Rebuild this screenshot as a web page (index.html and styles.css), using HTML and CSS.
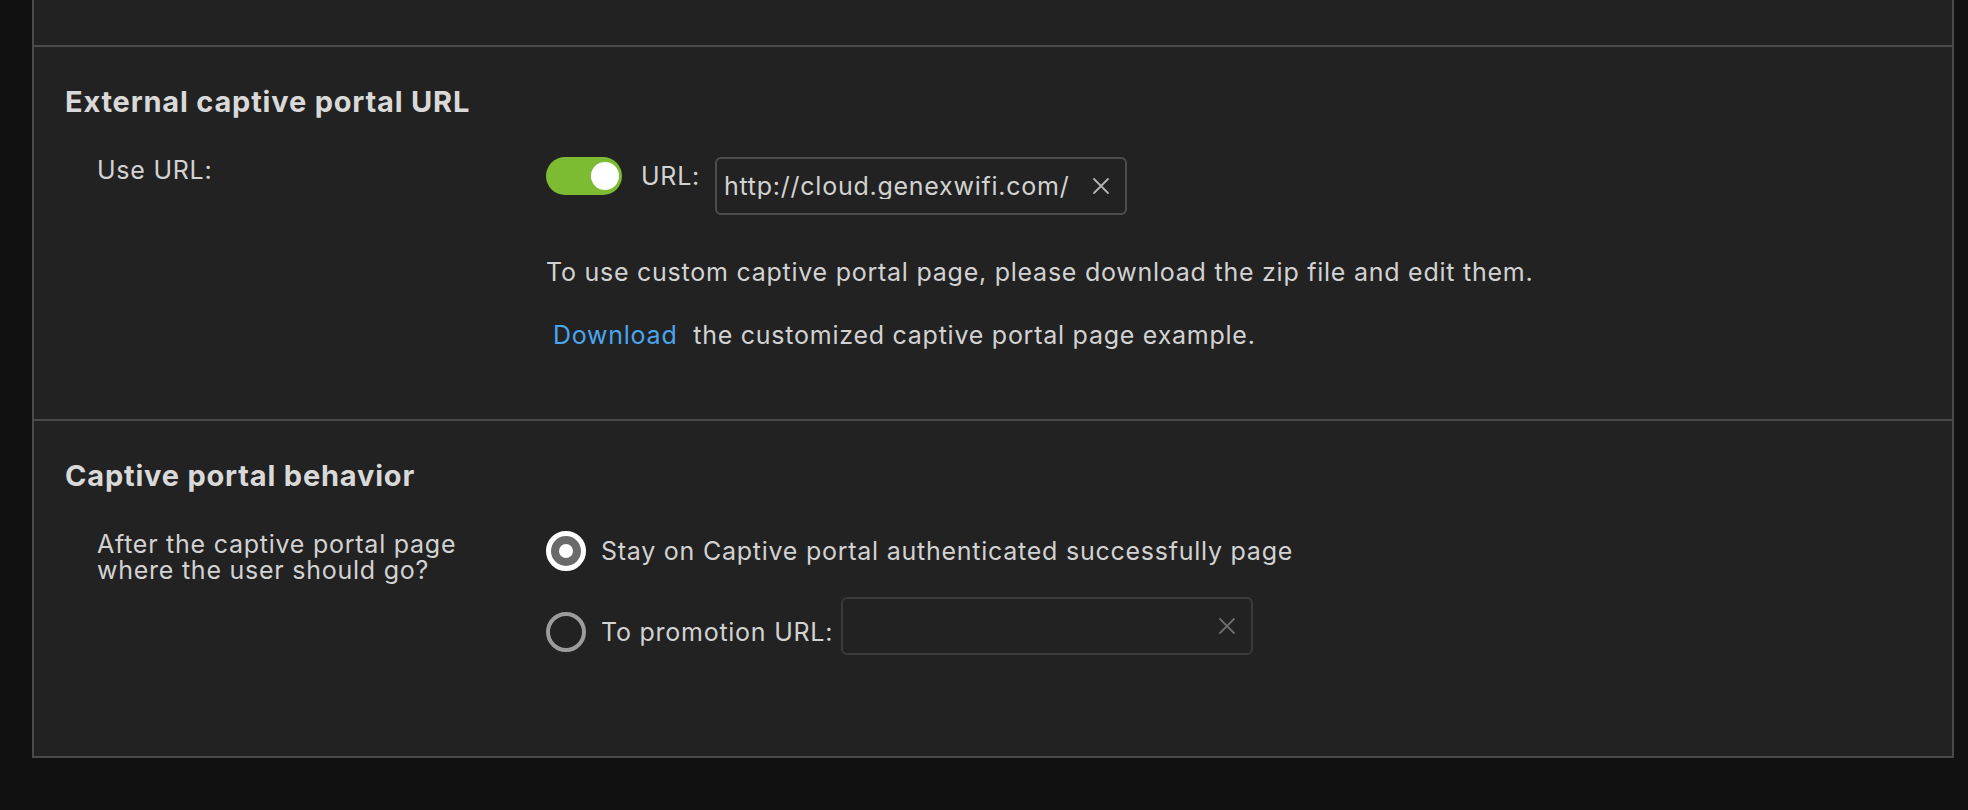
FILE: index.html
```html
<!DOCTYPE html>
<html lang="en">
<head>
<meta charset="utf-8">
<title>Captive portal settings</title>
<link rel="stylesheet" href="styles.css">
</head>
<body>
<div class="page">
  <div class="panel">
    <div class="prev-section"></div>

    <section class="section section-url">
      <h2 class="section-title">External captive portal URL</h2>
      <div class="row">
        <div class="row-label">Use URL:</div>
        <div class="row-content">
          <div class="url-line">
            <div class="toggle-group">
              <span class="toggle is-on"><span class="toggle-knob"></span></span>
              <span class="url-label">URL:</span>
            </div>
            <div class="field">
              <input class="field-input" type="text" value="http://cloud.genexwifi.com/captive-portal/login.html" readonly>
              <svg class="field-clear" viewBox="0 0 18 18" width="18" height="18" aria-hidden="true"><path d="M2 2 L16 16 M16 2 L2 16"/></svg>
            </div>
          </div>
          <p class="note note-first">To use custom captive portal page, please download the zip file and edit them.</p>
          <p class="note note-second"><a class="link" href="#">Download</a> the customized captive portal page example.</p>
        </div>
      </div>
    </section>

    <section class="section section-behavior">
      <h2 class="section-title">Captive portal behavior</h2>
      <div class="row">
        <div class="row-label">
          <span class="label-line">After the captive portal page</span>
          <span class="label-line">where the user should go?</span>
        </div>
        <div class="row-content">
          <div class="option">
            <span class="radio is-checked"><span class="radio-dot"></span></span>
            <span class="option-text">Stay on Captive portal authenticated successfully page</span>
          </div>
          <div class="option-promo">
            <div class="option">
              <span class="radio"></span>
              <span class="option-text">To promotion URL:</span>
            </div>
            <div class="field field-dim">
              <input class="field-input" type="text" value="" aria-label="Promotion URL">
              <svg class="field-clear" viewBox="0 0 18 18" width="18" height="18" aria-hidden="true"><path d="M2 2 L16 16 M16 2 L2 16"/></svg>
            </div>
          </div>
        </div>
      </div>
    </section>
  </div>
</div>
</body>
</html>
```
FILE: styles.css
```css
* { box-sizing: border-box; }

html, body {
  margin: 0;
  padding: 0;
  background: #111111;
}

body {
  font-family: Inter, "Noto Sans", sans-serif;
  font-size: 25px;
  line-height: 26px;
  letter-spacing: 0.75px;
  color: #d2d2d2;
}

.page {
  padding-left: 32px;
  height: 810px;
  overflow: hidden;
}

.panel {
  width: 1922px;
  background: #222222;
  border: 2px solid #4a4a4a;
  border-top: none;
}

.prev-section {
  height: 45px;
}

.section {
  border-top: 2px solid #4a4a4a;
  padding: 37px 0 0 31px;
}

.section-url { padding-bottom: 71px; }
.section-behavior { padding-bottom: 101px; }

.section-title {
  margin: 0;
  font-size: 29px;
  line-height: 36px;
  font-weight: 700;
  letter-spacing: 0.8px;
  color: #d9d9d9;
}

.row {
  display: flex;
  align-items: flex-start;
  margin-top: 37px;
  padding-left: 32px;
}

.row-label {
  width: 449px;
  flex: none;
}

.label-line {
  display: block;
  height: 26px;
}

.row-content {
  flex: 1;
  min-width: 0;
}

.url-line {
  display: flex;
  align-items: flex-start;
}

.toggle-group {
  display: flex;
  align-items: center;
  height: 38px;
}

.toggle {
  width: 76px;
  height: 38px;
  border-radius: 19px;
  background: #d0d0d0;
  display: flex;
  align-items: center;
  padding: 0 3px;
  flex: none;
}

.toggle.is-on {
  background: #7cbb32;
  justify-content: flex-end;
}

.toggle-knob {
  width: 28px;
  height: 28px;
  border-radius: 50%;
  background: #ffffff;
}

.url-label {
  margin-left: 19px;
  width: 74px;
}

.field {
  width: 412px;
  height: 58px;
  border: 2px solid #4d4d4d;
  border-radius: 6px;
  display: flex;
  align-items: center;
  padding: 0 15px 0 7px;
  flex: none;
}

.field-input {
  flex: 1;
  min-width: 0;
  margin: 0 23px 0 0;
  padding: 0;
  border: none;
  outline: none;
  background: transparent;
  font: inherit;
  letter-spacing: inherit;
  color: #d2d2d2;
  height: 26px;
}

.field-clear {
  flex: none;
  fill: none;
  stroke: #b4b4b4;
  stroke-width: 1.8;
  stroke-linecap: round;
}

.field-dim {
  border-color: #3a3a3a;
  margin-left: 8px;
  margin-top: -15px;
}

.field-dim .field-clear { stroke: #6e6e6e; }

.note { margin: 0; }
.note-first { margin-top: 44px; }
.note-second { margin-top: 37px; }

.link {
  color: #49a6ef;
  text-decoration: none;
  padding: 0 8px 0 7px;
}

.option {
  display: flex;
  align-items: center;
  height: 40px;
}

.option-text {
  margin-left: 15px;
  white-space: nowrap;
}

.option-promo {
  display: flex;
  align-items: flex-start;
  margin-top: 26px;
  padding-top: 15px;
}

.radio {
  width: 40px;
  height: 40px;
  border-radius: 50%;
  border: 4px solid #9c9c9c;
  flex: none;
  display: flex;
  align-items: center;
  justify-content: center;
}

.radio.is-checked {
  border: 5px solid #ffffff;
  background: #6a6a6a;
}

.radio-dot {
  width: 14px;
  height: 14px;
  border-radius: 50%;
  background: #ffffff;
}
```
